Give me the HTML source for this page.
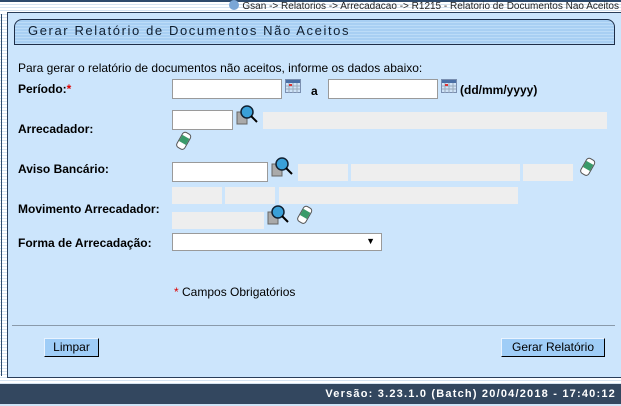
<!DOCTYPE html>
<html><head><meta charset="utf-8"><style>
*{margin:0;padding:0;box-sizing:border-box}
body{width:621px;height:406px;position:relative;overflow:hidden;background:#fff;font-family:"Liberation Sans",Arial,sans-serif;font-size:12px;color:#000}
.abs{position:absolute}
.stripes{background:repeating-linear-gradient(#fff 0 2px,#d6e4f2 2px 3px)}
.lbl{position:absolute;left:18px;font-weight:bold;font-size:12px}
.inp{position:absolute;background:#fff;border:1px solid #9a9a9a;height:20px}
.ro{position:absolute;background:#eeeeee;height:17px}
.btn{position:absolute;background:#9fcdf7;border:1px solid #000;border-top-color:#e8f3ff;border-left-color:#e8f3ff;font-size:12px;text-align:center;line-height:17px;height:19px}
</style></head><body>
<div class="abs" style="left:0;top:0;width:621px;height:2px;background:#2d4a6c"></div>
<div class="abs stripes" style="left:0;top:2px;width:621px;height:10px"></div>
<div class="abs" style="right:2px;top:0;font-size:10px;color:#222;line-height:12px"><span style="display:inline-block;width:10px;height:10px;border-radius:50%;background:#7aa6d6;vertical-align:-1px;margin-right:3px"></span>Gsan -&gt; Relatorios -&gt; Arrecadacao -&gt; R1215 - Relatorio de Documentos Nao Aceitos</div>
<div class="abs stripes" style="left:0;top:12px;width:7px;height:366px"></div>
<div class="abs" style="left:1px;top:14px;width:1px;height:362px;background:#2d4a6c"></div>
<div class="abs" style="left:7px;top:12px;width:614px;height:366px;background:#cce5fc;border:1px solid #2a3e5a;border-right:none"></div>
<div class="abs" style="left:14px;top:19px;width:601px;height:26px;border:1px solid #1e2e48;border-radius:8px 8px 0 0;background:repeating-linear-gradient(#a8cff3 0 2px,#bcdcf8 2px 3px)"></div>
<div class="abs" style="left:28px;top:23px;font-size:13px;letter-spacing:1.6px;color:#0f1e30">Gerar Relatório de Documentos Não Aceitos</div>
<div class="abs" style="left:18px;top:61px;font-size:12px">Para gerar o relatório de documentos não aceitos, informe os dados abaixo:</div>
<div class="lbl" style="top:82px">Período:<span style="color:#d00">*</span></div>
<div class="inp" style="left:172px;top:79px;width:110px"></div>
<svg class="abs" style="left:285px;top:79px" width="16" height="14"><rect x="0.5" y="0.5" width="15" height="13" fill="#cfe3f7" stroke="#7a8fb0"/><rect x="1" y="1" width="14" height="3" fill="#4a6fa5"/><path d="M4 4v10M8 4v10M12 4v10M1 7h14M1 10h14" stroke="#9ab" stroke-width="1"/><rect x="4" y="5" width="3" height="2" fill="#d33"/></svg>
<div class="abs" style="left:311px;top:84px;font-weight:bold">a</div>
<div class="inp" style="left:328px;top:79px;width:110px"></div>
<svg class="abs" style="left:441px;top:79px" width="16" height="14"><rect x="0.5" y="0.5" width="15" height="13" fill="#cfe3f7" stroke="#7a8fb0"/><rect x="1" y="1" width="14" height="3" fill="#4a6fa5"/><path d="M4 4v10M8 4v10M12 4v10M1 7h14M1 10h14" stroke="#9ab" stroke-width="1"/><rect x="4" y="5" width="3" height="2" fill="#d33"/></svg>
<div class="abs" style="left:460px;top:83px;font-weight:bold">(dd/mm/yyyy)</div>
<div class="lbl" style="top:122px">Arrecadador:</div>
<div class="inp" style="left:172px;top:110px;width:61px"></div>
<svg class="abs" style="left:236px;top:104px" width="24" height="24"><rect x="1" y="8" width="10" height="12" fill="#aaa" stroke="#666"/><circle cx="11" cy="8" r="6" fill="#3aa0d8" stroke="#123" stroke-width="1.5"/><path d="M15 12l6 6" stroke="#000" stroke-width="2"/></svg>
<div class="ro" style="left:263px;top:112px;width:344px"></div>
<svg class="abs" style="left:174px;top:131px" width="18" height="20"><g transform="rotate(30 9 10)"><rect x="5" y="1" width="9" height="17" rx="3" fill="#fff" stroke="#555"/><rect x="5.5" y="5" width="8" height="7" fill="#3a9a6a"/></g></svg>
<div class="lbl" style="top:162px">Aviso Bancário:</div>
<div class="inp" style="left:172px;top:162px;width:96px"></div>
<svg class="abs" style="left:271px;top:156px" width="24" height="24"><rect x="1" y="8" width="10" height="12" fill="#aaa" stroke="#666"/><circle cx="11" cy="8" r="6" fill="#3aa0d8" stroke="#123" stroke-width="1.5"/><path d="M15 12l6 6" stroke="#000" stroke-width="2"/></svg>
<div class="ro" style="left:298px;top:164px;width:50px"></div>
<div class="ro" style="left:351px;top:164px;width:169px"></div>
<div class="ro" style="left:523px;top:164px;width:50px"></div>
<svg class="abs" style="left:578px;top:157px" width="18" height="20"><g transform="rotate(30 9 10)"><rect x="5" y="1" width="9" height="17" rx="3" fill="#fff" stroke="#555"/><rect x="5.5" y="5" width="8" height="7" fill="#3a9a6a"/></g></svg>
<div class="ro" style="left:172px;top:187px;width:50px"></div>
<div class="ro" style="left:225px;top:187px;width:50px"></div>
<div class="ro" style="left:279px;top:187px;width:239px"></div>
<div class="lbl" style="top:202px">Movimento Arrecadador:</div>
<div class="ro" style="left:172px;top:212px;width:92px"></div>
<svg class="abs" style="left:267px;top:204px" width="24" height="24"><rect x="1" y="8" width="10" height="12" fill="#aaa" stroke="#666"/><circle cx="11" cy="8" r="6" fill="#3aa0d8" stroke="#123" stroke-width="1.5"/><path d="M15 12l6 6" stroke="#000" stroke-width="2"/></svg>
<svg class="abs" style="left:295px;top:205px" width="18" height="20"><g transform="rotate(30 9 10)"><rect x="5" y="1" width="9" height="17" rx="3" fill="#fff" stroke="#555"/><rect x="5.5" y="5" width="8" height="7" fill="#3a9a6a"/></g></svg>
<div class="lbl" style="top:236px">Forma de Arrecadação:</div>
<div class="inp" style="left:172px;top:233px;width:210px;height:18px"><span style="position:absolute;right:6px;top:2px;font-size:9px">▼</span></div>
<div class="abs" style="left:174px;top:285px"><span style="color:#d00">*</span> Campos Obrigatórios</div>
<div class="abs" style="left:12px;top:325px;width:603px;height:1px;background:#8a9aaa"></div>
<div class="btn" style="left:44px;top:338px;width:55px">Limpar</div>
<div class="btn" style="left:501px;top:338px;width:104px">Gerar Relatório</div>
<div class="abs stripes" style="left:0;top:378px;width:621px;height:6px"></div>
<div class="abs" style="left:0;top:384px;width:621px;height:20px;background:#33475f"></div>
<div class="abs" style="right:5px;top:388px;color:#fff;font-weight:bold;font-size:11px;letter-spacing:1.2px">Versão: 3.23.1.0 (Batch) 20/04/2018 - 17:40:12</div>
<div class="abs" style="left:0;top:404px;width:621px;height:2px;background:#cfe4f7"></div>
</body></html>
